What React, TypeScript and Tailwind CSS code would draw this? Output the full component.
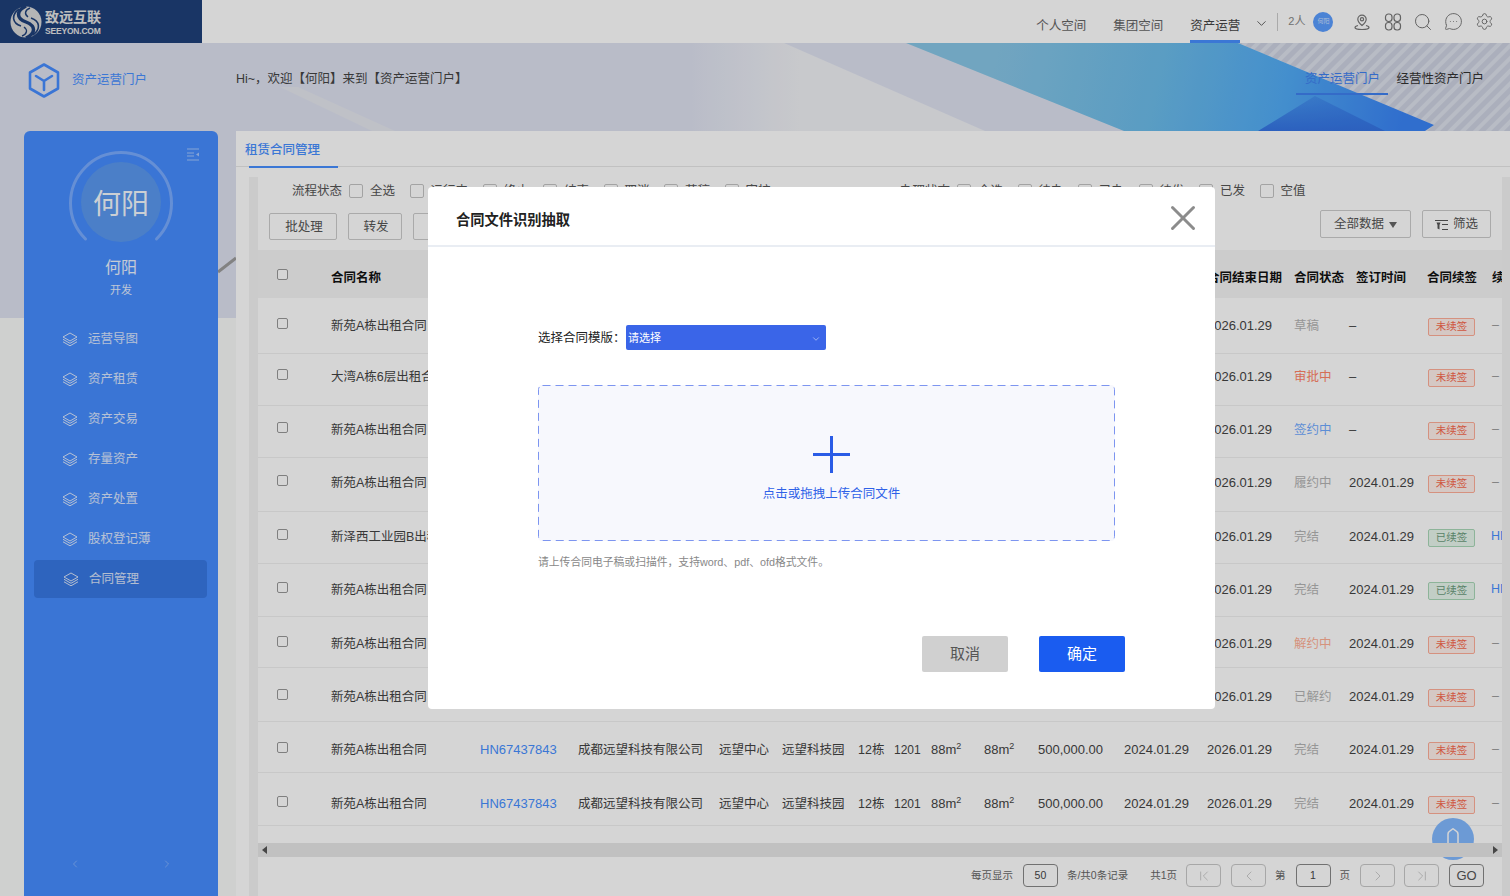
import React from 'react';
import {
  ChevronDown,
  ChevronFirst,
  ChevronLast,
  ChevronLeft,
  ChevronRight,
  MessageCircleMore,
  Search,
  Settings,
  X,
} from 'lucide-react';

const menu = ['运营导图', '资产租赁', '资产交易', '存量资产', '资产处置', '股权登记薄'];

const columns =
  'grid grid-cols-[73px_149px_98px_141px_63px_76px_36px_37px_53px_54px_86px_83px_87px_55px_79px_64px_10px]';

const rows = [
  { name: '新苑A栋出租合同', status: '草稿', tone: 'text-[#b4b4b4]', signed: '–', renewed: false, box: 'h-[56px]' },
  { name: '大湾A栋6层出租合同', status: '审批中', tone: 'text-[#ff8468]', signed: '–', renewed: false, box: 'h-[52px] pb-[6px]' },
  { name: '新苑A栋出租合同', status: '签约中', tone: 'text-[#6faaff]', signed: '–', renewed: false, box: 'h-[52px] pb-[4px]' },
  { name: '新苑A栋出租合同', status: '履约中', tone: 'text-[#b4b4b4]', signed: '2024.01.29', renewed: false, box: 'h-[54px] pb-[4px]' },
  { name: '新泽西工业园B出租合同', status: '完结', tone: 'text-[#b4b4b4]', signed: '2024.01.29', renewed: true, box: 'h-[52px] pb-[2px]' },
  { name: '新苑A栋出租合同', status: '完结', tone: 'text-[#b4b4b4]', signed: '2024.01.29', renewed: true, box: 'h-[53px] pb-[1px]' },
  { name: '新苑A栋出租合同', status: '解约中', tone: 'text-[#ffb096]', signed: '2024.01.29', renewed: false, box: 'h-[51px] pt-[3px]' },
  { name: '新苑A栋出租合同', status: '已解约', tone: 'text-[#b4b4b4]', signed: '2024.01.29', renewed: false, box: 'h-[54px] pt-[4px]' },
  { name: '新苑A栋出租合同', status: '完结', tone: 'text-[#b4b4b4]', signed: '2024.01.29', renewed: false, box: 'h-[51px] pt-[5px]' },
  { name: '新苑A栋出租合同', status: '完结', tone: 'text-[#b4b4b4]', signed: '2024.01.29', renewed: false, box: 'h-[53px] pt-[9px]' },
];

const Banner = () => (
  <svg className="absolute left-0 top-[43px] w-[1510px] h-[275px]" viewBox="0 43 1510 275">
    <defs>
      <linearGradient id="blue" gradientUnits="userSpaceOnUse" x1="1000" y1="40" x2="1400" y2="130">
        <stop offset="0" stopColor="#88c6e6" />
        <stop offset="0.4" stopColor="#6cbcea" />
        <stop offset="0.7" stopColor="#52acf6" />
        <stop offset="1" stopColor="#3a84f6" />
      </linearGradient>
      <linearGradient id="pale" gradientUnits="userSpaceOnUse" x1="690" y1="0" x2="800" y2="0">
        <stop offset="0" stopColor="#f0f1f5" stopOpacity="0" />
        <stop offset="1" stopColor="#f0f1f5" />
      </linearGradient>
      <linearGradient id="deep" x1="0" y1="0" x2="0" y2="1">
        <stop offset="0" stopColor="#3574e4" stopOpacity="0.35" />
        <stop offset="1" stopColor="#3574e4" />
      </linearGradient>
      <pattern id="hatch" width="9" height="9" patternUnits="userSpaceOnUse" patternTransform="rotate(-45)">
        <rect width="9" height="9" fill="#cdd2e1" />
        <rect width="9" height="4" fill="#dde1ec" />
      </pattern>
    </defs>
    <rect x="0" y="43" width="1510" height="275" fill="#dee2f0" />
    <polygon points="280,87 298,87 395,131 372,131" fill="#e5e7ef" />
    <polygon points="690,43 784,43 985,131 690,131" fill="url(#pale)" />
    <polygon points="1238,43 1510,43 1510,131 1425,131 1434,125" fill="url(#hatch)" />
    <polygon points="906,43 1238,43 1434,125 1425,131 1124,131" fill="url(#blue)" />
    <polygon points="1315,96 1385,131 1258,131" fill="url(#deep)" />
    <line x1="218" y1="272" x2="236" y2="258" stroke="#9c9c9c" strokeWidth="3" />
  </svg>
);

const Logo = () => (
  <svg width="34" height="36" viewBox="0 0 34 36" fill="none">
    <circle cx="17" cy="18" r="15.5" fill="#d9d9d9" />
    <path d="M17 2C7 7 7 14 17 18c10 4 10 11 0 16" stroke="#1f407a" strokeWidth="3.5" />
    <path d="M10 5C2 11 3 19 12 22M24 31c8-6 7-14-2-17" stroke="#1f407a" strokeWidth="1.6" />
    <path d="M21 4c-5 2-6 6-2 9M13 32c5-2 6-6 2-9" stroke="#1f407a" strokeWidth="1.4" />
  </svg>
);

const Hexagon = () => (
  <svg width="32" height="35" viewBox="0 0 32 35" fill="none" stroke="#468cff" strokeWidth="2.6" strokeLinejoin="round">
    <polygon points="16,1.5 30,9.5 30,25.5 16,33.5 2,25.5 2,9.5" />
    <path d="M8 13l8 5 8-5M16 18v9" strokeLinecap="round" />
  </svg>
);

const Stack = () => (
  <svg width="16" height="15" viewBox="0 0 16 15" fill="none" stroke="currentColor" strokeWidth="1">
    <path d="M8 1l7 4-7 4-7-4z" />
    <path d="M1 7.3l7 4 7-4M1 9.8l7 4 7-4" />
  </svg>
);

const Pin = () => (
  <svg width="18" height="18" viewBox="0 0 18 18" fill="none" stroke="currentColor" strokeWidth="1.2">
    <path d="M9 12.5C6.5 10.5 4.8 8.6 4.8 6.3a4.2 4.2 0 0 1 8.4 0c0 2.3-1.7 4.2-4.2 6.2z" />
    <circle cx="9" cy="6.2" r="1.6" />
    <path d="M5 12.5c-2 .5-3 1.2-3 2 0 1.2 3.200 2 7 2s7-.8 7-2c0-.8-1-1.500-3-2" />
  </svg>
);

const Loops = () => (
  <svg width="18" height="18" viewBox="0 0 18 18" fill="none" stroke="currentColor" strokeWidth="1.2">
    <rect x="1.500" y="1" width="6.500" height="7.500" rx="3" />
    <rect x="10" y="1" width="6.500" height="7.500" rx="3" />
    <rect x="1.500" y="9.500" width="6.500" height="7.500" rx="3" />
    <rect x="10" y="9.500" width="6.500" height="7.500" rx="3" />
  </svg>
);

const Collapse = () => (
  <svg width="12" height="13" viewBox="0 0 12 13" fill="none" stroke="currentColor" strokeWidth="1">
    <path d="M0 1h12M0 5h7M0 8h7M0 12h12" />
    <path d="M12 4.5v4L9 6.500z" fill="currentColor" stroke="none" />
  </svg>
);

const FilterIcon = () => (
  <svg width="13" height="12" viewBox="0 0 13 12" fill="none" stroke="currentColor" strokeWidth="1.1">
    <path d="M0 1.500h13M7 5.500h6M7 10.500h6" />
    <path d="M1.500 3.500h4L4.500 6v4.500l-2-1V6z" fill="currentColor" stroke="none" />
  </svg>
);

const FilterCheck = ({ label }: { label: string }) => (
  <div className="flex items-center gap-[7px]">
    <span className="w-[14px] h-[14px] rounded-[2px] border border-[#c4c4c4]" />
    <span>{label}</span>
  </div>
);

const PageButton = ({ children, className }: { children: React.ReactNode; className?: string }) => (
  <span
    className={`flex items-center justify-center w-[35px] h-[23px] rounded-[4px] border border-[#c8c8c8] text-[#c0c0c0] ${className ?? ''}`}
  >
    {children}
  </span>
);

const Sidebar = () => (
  <aside className="relative flex flex-col w-[194px] h-[765px] rounded-t-[6px] bg-[#468cff] text-white">
    <span className="absolute right-[19px] top-[17px] text-white/50">
      <Collapse />
    </span>
    <div className="relative mx-auto mt-[20px] w-[110px] h-[92px] pt-[11px] flex justify-center">
      <svg className="absolute left-0 top-0" width="110" height="92" viewBox="0 0 110 92" fill="none">
        <path d="M19.500 88A50.500 50.500 0 1 1 90.500 88" stroke="#fff" strokeOpacity="0.28" strokeWidth="3" strokeLinecap="round" />
      </svg>
      <div className="flex items-center justify-center w-[80px] h-[80px] pt-[6px] rounded-full bg-[#5a99f0] text-[28px] text-white/95">
        何阳
      </div>
    </div>
    <div className="mt-[13px] text-center text-[16px] leading-[24px] text-white/90">何阳</div>
    <div className="mt-[2px] text-center text-[11px] leading-[16px] text-white/85">开发</div>
    <nav className="mt-[21px] text-[12.500px] text-white/80">
      {menu.map((item) => (
        <div key={item} className="flex items-center gap-[10px] h-[40px] mx-[10px] pl-[28px]">
          <Stack />
          <span>{item}</span>
        </div>
      ))}
      <div className="flex items-center gap-[10px] h-[38px] mt-[1px] mx-[10px] mr-[11px] pl-[29px] rounded-[4px] bg-[#3878e4]">
        <Stack />
        <span>合同管理</span>
      </div>
    </nav>
    <div className="mt-auto mb-[26px] flex justify-between px-[45px] text-white/30">
      <ChevronLeft size={12} />
      <ChevronRight size={12} />
    </div>
  </aside>
);

const Table = () => (
  <div className="text-[12.500px] text-[#444]">
    <div className={`${columns} h-[48px] pt-[8px] items-center bg-[#f5f5f5] font-bold text-[#111]`}>
      <span className="pl-[19px] pb-[8px]">
        <span className="block w-[11px] h-[11px] rounded-[2px] border border-[#999] bg-white" />
      </span>
      <span className="col-start-2 whitespace-nowrap">合同名称</span>
      <span className="col-start-13 whitespace-nowrap">合同结束日期</span>
      <span className="col-start-14 whitespace-nowrap">合同状态</span>
      <span className="col-start-15 pl-[7px] whitespace-nowrap">签订时间</span>
      <span className="col-start-16 -ml-[1px] whitespace-nowrap">合同续签</span>
      <span className="col-start-17 overflow-hidden whitespace-nowrap">续</span>
    </div>
    {rows.map((row, index) => (
      <div key={index} className={`${columns} ${row.box} items-center border-b border-[#f0f0f0] whitespace-nowrap`}>
        <span className="pl-[19px] pb-[4px]">
          <span className="block w-[11px] h-[11px] rounded-[2px] border border-[#999] bg-white" />
        </span>
        <span className="overflow-hidden pt-[2px]">{row.name}</span>
        <span className="text-[13px] text-[#478fff]">HN67437843</span>
        <span className="pt-[2px]">成都远望科技有限公司</span>
        <span className="pt-[2px]">远望中心</span>
        <span className="pt-[2px]">远望科技园</span>
        <span className="pt-[2px]">12栋</span>
        <span className="text-[12px]">1201</span>
        <span className="text-[13px]">
          88m<sup className="text-[9px]">2</sup>
        </span>
        <span className="text-[13px]">
          88m<sup className="text-[9px]">2</sup>
        </span>
        <span className="text-[13px]">500,000.00</span>
        <span className="text-[13px]">2024.01.29</span>
        <span className="text-[13px]">2026.01.29</span>
        <span className={`pt-[2px] ${row.tone}`}>{row.status}</span>
        <span className="text-[13px]">{row.signed}</span>
        <span className="pt-[2px]">
          {row.renewed ? (
            <span className="flex items-center justify-center w-[47px] h-[18px] rounded-[2px] border border-[#a9d8b8] bg-[#e9f7ee] text-[10.500px] text-[#6c9c7c]">
              已续签
            </span>
          ) : (
            <span className="flex items-center justify-center w-[47px] h-[18px] rounded-[2px] border border-[#ffae98] bg-[#fff0eb] text-[10.500px] text-[#f8694e]">
              未续签
            </span>
          )}
        </span>
        {row.renewed ? (
          <span className="-ml-[1px] w-[11px] overflow-hidden text-[#478fff]">HN</span>
        ) : (
          <span className="text-[#999]">–</span>
        )}
      </div>
    ))}
  </div>
);

const Pagination = () => (
  <div className="flex items-center justify-end h-[37px] pr-[18px] text-[10.500px] text-[#666]">
    <span>每页显示</span>
    <span className="flex items-center justify-center w-[35px] h-[23px] ml-[10px] rounded-[4px] border border-[#888] text-[#444]">50</span>
    <span className="ml-[9px]">条/共0条记录</span>
    <span className="ml-[22px]">共1页</span>
    <PageButton className="ml-[9px]">
      <ChevronFirst size={16} strokeWidth={1.200} />
    </PageButton>
    <PageButton className="ml-[10px]">
      <ChevronLeft size={16} strokeWidth={1.200} />
    </PageButton>
    <span className="ml-[9px]">第</span>
    <span className="flex items-center justify-center w-[35px] h-[23px] ml-[10px] rounded-[4px] border border-[#888] text-[#444]">1</span>
    <span className="ml-[9px]">页</span>
    <PageButton className="ml-[10px]">
      <ChevronRight size={16} strokeWidth={1.200} />
    </PageButton>
    <PageButton className="ml-[9px]">
      <ChevronLast size={16} strokeWidth={1.200} />
    </PageButton>
    <span className="flex items-center justify-center w-[35px] h-[23px] ml-[10px] rounded-[4px] border border-[#888] text-[13px] text-[#555]">GO</span>
  </div>
);

const Main = () => (
  <main className="relative flex flex-col flex-1 h-[765px] bg-white">
    <div className="h-[36px] border-b border-[#e8e8e8]">
      <div className="relative w-[93px] h-[36px] ml-[9px] pt-[10px] text-[12.500px] leading-[18px] font-medium text-[#478fff]">
        租赁合同管理
        <span className="absolute left-[4px] bottom-[-1px] w-[89px] h-[2px] bg-[#478fff]" />
      </div>
    </div>
    <div className="flex flex-1 mt-[10px] pl-[13px]">
      <div className="w-[9px] bg-[#f3f3f3]" />
      <div className="flex flex-col w-[1244px]">
        <div className="h-[73px] text-[12.500px] text-[#555]">
          <div className="flex items-center h-[26px] pt-[2px] pl-[34px]">
            <div className="flex items-center gap-[7px] w-[608px]">
              <span>流程状态</span>
              <div className="flex items-center gap-[14.500px]">
                {['全选', '运行中', '终止', '结束', '取消', '草稿', '审核'].map((label) => (
                  <FilterCheck key={label} label={label} />
                ))}
              </div>
            </div>
            <div className="flex items-center gap-[7px]">
              <span>办理状态</span>
              <div className="flex items-center gap-[14.500px]">
                {['全选', '待办', '已办', '待发', '已发', '空值'].map((label) => (
                  <FilterCheck key={label} label={label} />
                ))}
              </div>
            </div>
          </div>
          <div className="flex items-start pl-[11px] pr-[11px]">
            <span className="flex items-center justify-center w-[68px] h-[27px] mt-[10px] pt-[2px] pl-[2px] rounded-[2px] border border-[#ccc]">批处理</span>
            <span className="flex items-center justify-center w-[54px] h-[27px] mt-[10px] ml-[11px] pt-[2px] pl-[2px] rounded-[2px] border border-[#ccc]">转发</span>
            <span className="w-[60px] h-[27px] mt-[10px] ml-[11px] rounded-[2px] border border-[#ccc]" />
            <span className="flex items-center justify-center gap-[5px] w-[91px] h-[28px] mt-[7px] ml-auto pt-[1px] rounded-[2px] border border-[#ccc]">
              全部数据
              <span className="w-0 h-0 border-x-[4.500px] border-t-[6px] border-x-transparent border-t-[#666]" />
            </span>
            <span className="flex items-center justify-center gap-[5px] w-[69px] h-[28px] mt-[7px] ml-[11px] pt-[1px] rounded-[2px] border border-[#ccc]">
              <FilterIcon />
              筛选
            </span>
          </div>
        </div>
        <Table />
        <div className="relative z-10 flex items-center justify-between h-[14px] mt-[17px] px-[4px] bg-[#e8e8e8] text-[#555]">
          <span className="w-0 h-0 border-y-[4px] border-r-[5px] border-y-transparent border-r-[#555]" />
          <span className="w-0 h-0 border-y-[4px] border-l-[5px] border-y-transparent border-l-[#555]" />
        </div>
        <Pagination />
      </div>
      <div className="w-[8px] bg-[#f3f3f3]" />
    </div>
    <div className="absolute left-[1196px] top-[687px] w-[42px] h-[42px] rounded-full bg-[#82b9ff]">
      <svg className="absolute left-[15px] top-[10px]" width="12" height="15" viewBox="0 0 12 15" fill="none" stroke="#fff" strokeWidth="1.500">
        <path d="M1 15V6C1 3 4 2.500 6 .8 8 2.500 11 3 11 6v9" />
      </svg>
    </div>
  </main>
);

const Modal = () => (
  <div className="absolute left-[428px] top-[187px] w-[787px] h-[522px] rounded-[4px] bg-white">
    <div className="flex items-center justify-between h-[60px] pl-[28px] pr-[11px] border-b-2 border-[#e9edf3]">
      <h2 className="pt-[9px] text-[14.250px] font-bold text-[#222]">合同文件识别抽取</h2>
      <X size={42} strokeWidth={1.700} className="mt-[4px] text-[#8c8c8c]" />
    </div>
    <div className="pl-[110px] pt-[78px]">
      <div className="flex items-center h-[25px] text-[12.500px] text-[#222]">
        <span className="w-[88px] pt-[2px]">选择合同模版：</span>
        <div className="flex items-center justify-between w-[200px] h-[25px] pl-[2px] pr-[5px] pt-[2px] rounded-[2px] bg-[#3a65e8] text-[11px] text-white">
          请选择
          <ChevronDown size={10} strokeWidth={1.200} />
        </div>
      </div>
      <div className="relative flex flex-col items-center w-[577px] h-[156px] mt-[35px] pl-[10px] pt-[51px] rounded-[4px] bg-[#f7f8fd] text-[12.500px] text-[#2f62e8]">
        <svg className="absolute left-0 top-0" width="577" height="156" fill="none">
          <rect x="0.500" y="0.500" width="576" height="155" rx="4" stroke="#7d95f0" strokeDasharray="8 5" />
        </svg>
        <svg width="37" height="37" viewBox="0 0 37 37" stroke="#2a5ce6" strokeWidth="3">
          <path d="M18.500 0v37M0 18.500h37" />
        </svg>
        <span className="mt-[12px]">点击或拖拽上传合同文件</span>
      </div>
      <p className="mt-[13px] text-[10.800px] text-[#888]">请上传合同电子稿或扫描件，支持word、pdf、ofd格式文件。</p>
    </div>
    <div className="absolute left-[494px] top-[449px] flex gap-[31px] text-[15px]">
      <span className="flex items-center justify-center w-[86px] h-[36px] rounded-[2px] bg-[#d0d0d0] text-[#555]">取消</span>
      <span className="flex items-center justify-center w-[86px] h-[36px] rounded-[2px] bg-[#1a5cf0] text-white">确定</span>
    </div>
  </div>
);

export default function App() {
  return (
    <div className="relative isolate w-[1510px] h-[896px] overflow-hidden bg-[#f8f9f8] [font-family:'Liberation_Sans','Noto_Sans_CJK_SC',sans-serif]">
      <Banner />
      <header className="relative flex items-center h-[43px] bg-white text-[#666]">
        <div className="flex items-center gap-[1px] w-[202px] h-[43px] pl-[9px] bg-[#1f407a] text-[#e4e4e4]">
          <Logo />
          <div className="ml-[1px] flex flex-col">
            <span className="text-[14px] leading-[18px] pt-[1px] font-bold">致远互联</span>
            <span className="text-[8.500px] leading-[10px] font-bold tracking-[-0.2px]">SEEYON.COM</span>
          </div>
        </div>
        <nav className="flex items-center ml-auto text-[12.500px]">
          <span className="flex items-center h-[43px] pt-[12px] border-b-[3px] border-transparent">个人空间</span>
          <span className="flex items-center h-[43px] ml-[27px] pt-[12px] border-b-[3px] border-transparent">集团空间</span>
          <span className="flex items-center h-[43px] ml-[27px] pt-[12px] border-b-[3px] border-[#478fff] text-[#444]">资产运营</span>
          <ChevronDown size={15} strokeWidth={1.300} className="ml-[14px] mt-[4px] text-[#444]" />
          <span className="ml-[8px] w-px h-[18px] bg-[#ccc]" />
          <span className="ml-[10px] text-[11px] text-[#888]">2人</span>
          <span className="flex items-center justify-center w-[20px] h-[20px] ml-[8px] rounded-full bg-[#5a9dff] text-[6px] text-white/70">何阳</span>
        </nav>
        <div className="flex items-center gap-[12.400px] ml-[20px] mr-[17px] text-[#777]">
          <Pin />
          <Loops />
          <span className="flex items-center justify-center w-[18px] h-[18px]">
            <Search size={20} strokeWidth={1.200} className="shrink-0" />
          </span>
          <span className="flex items-center justify-center w-[18px] h-[18px]">
            <MessageCircleMore size={19} strokeWidth={1.200} className="shrink-0" />
          </span>
          <span className="flex items-center justify-center w-[18px] h-[18px]">
            <Settings size={19} strokeWidth={1.200} className="shrink-0" />
          </span>
        </div>
      </header>
      <div className="relative flex items-start h-[88px] text-[12.500px]">
        <div className="flex items-center gap-[12px] ml-[28px] mt-[20px] text-[#478fff]">
          <Hexagon />
          <span>资产运营门户</span>
        </div>
        <span className="ml-[89px] mt-[27px] text-[#444]">Hi~，欢迎【何阳】来到【资产运营门户】</span>
        <div className="flex ml-auto mr-[26px] mt-[17px]">
          <span className="w-[92px] h-[35px] pt-[10px] text-center border-b-2 border-[#3f80f0] text-[#3f80f0]">资产运营门户</span>
          <span className="ml-[8px] pt-[10px] text-[#333]">经营性资产门户</span>
        </div>
      </div>
      <div className="relative z-0 flex gap-[18px] pl-[24px]">
        <Sidebar />
        <Main />
      </div>
      <div className="absolute inset-0 bg-black/[0.165]" />
      <Modal />
    </div>
  );
}
